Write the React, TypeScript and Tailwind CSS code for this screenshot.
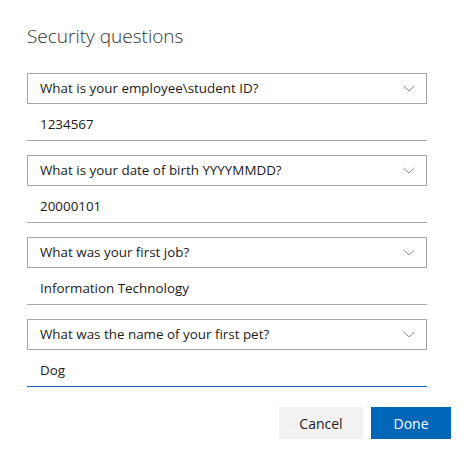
const questions = [
  { q: 'What is your employee\\student ID?', a: '1234567' },
  { q: 'What is your date of birth YYYYMMDD?', a: '20000101' },
  { q: 'What was your first job?', a: 'Information Technology' },
  { q: 'What was the name of your first pet?', a: 'Dog', active: true },
];

function Chevron() {
  return (
    <svg width="12" height="7" viewBox="0 0 12 7" fill="none" className="text-[#8a8a8a]">
      <path d="M0.5 1 L6 5.8 L11.5 1" stroke="currentColor" strokeWidth="1" />
    </svg>
  );
}

function QuestionRow({ q, a, active }: { q: string; a: string; active?: boolean }) {
  return (
    <div className="flex flex-col">
      <div className="flex h-[31px] items-center justify-between border border-[#a6a6a6] pl-[12px] pr-[11px]">
        <span className="text-[13.4px] text-[#1b1b1b]">{q}</span>
        <Chevron />
      </div>
      <div
        className={`flex h-[37px] items-center pl-[13px] pt-[4px] text-[13.4px] text-[#1b1b1b] border-b ${
          active ? 'border-[#0f6cbd]' : 'border-[#a6a6a6]'
        }`}
      >
        {a}
      </div>
    </div>
  );
}

export default function App() {
  return (
    <div
      className="min-h-[459px] w-[476px] bg-white"
      style={{ fontFamily: '"Open Sans", "Noto Sans", sans-serif' }}
    >
      <div className="px-[27px] pt-[22px]">
        <h1 className="text-[19px] font-light leading-[28px] text-[#333]">Security questions</h1>
        <div className="mt-[23px] flex w-[400px] flex-col gap-[14px]">
          {questions.map((item) => (
            <QuestionRow key={item.q} {...item} />
          ))}
        </div>
        <div className="mt-[20px] flex w-[424px] justify-end gap-[8px]">
          <button className="h-[32px] w-[84px] bg-[#f2f2f2] text-[14px] text-[#1b1b1b]">Cancel</button>
          <button className="h-[32px] w-[80px] bg-[#0067b8] text-[14px] text-white">Done</button>
        </div>
      </div>
    </div>
  );
}
